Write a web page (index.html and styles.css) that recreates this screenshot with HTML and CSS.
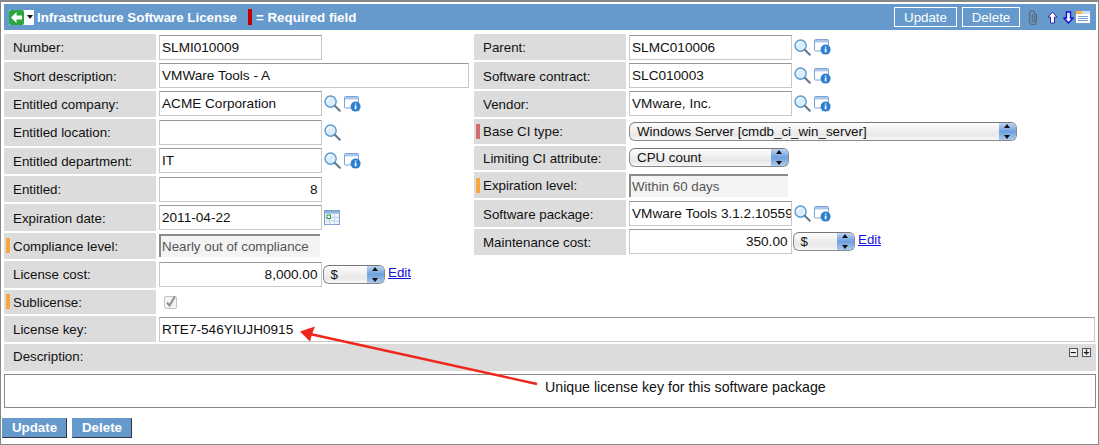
FILE: index.html
```html
<!DOCTYPE html>
<html lang="en">
<head>
  <meta charset="UTF-8">
  <title>Infrastructure Software License</title>
  <link rel="stylesheet" href="styles.css">
</head>
<body>

<svg class="defs" width="0" height="0">
  <defs>
    <symbol id="lens" viewBox="0 0 17 17">
      <circle cx="6.6" cy="6.6" r="5.6" fill="#dceefb" stroke="#5b9bd0" stroke-width="1.4"/>
      <path d="M3.4 6.4a3.2 3.2 0 0 1 3.2-3.2" fill="none" stroke="#fff" stroke-width="1.3"/>
      <path d="M10.8 10.8l5 5" stroke="#66788c" stroke-width="2" stroke-linecap="round"/>
    </symbol>
    <symbol id="info" viewBox="0 0 17 16">
      <rect x=".5" y=".5" width="14" height="11.5" rx="1" fill="#fff" stroke="#7ba3d6"/>
      <rect x="1" y="1" width="13" height="2.4" fill="#a9c6ea"/>
      <circle cx="11.6" cy="10.6" r="5" fill="#2f7fd0"/>
      <path d="M11.6 7.4v1.2M11.6 9.6v3.6" stroke="#fff" stroke-width="1.7"/>
    </symbol>
  </defs>
</svg>

<div class="page">
  <div class="title-bar">
    <div class="nav-btn">
      <svg width="15" height="15" viewBox="0 0 15 15">
        <rect width="15" height="15" rx="2" fill="#2ba63c"/>
        <path d="M7.5 2L2 7.5l5.5 5.5V9.6H13V5.4H7.5z" fill="#fff"/>
      </svg>
      <span class="caret"></span>
    </div>
    <span class="title">Infrastructure Software License</span>
    <span class="req-mark"></span>
    <span class="title">= Required field</span>
    <div class="title-actions">
      <button class="head-btn btn-a">Update</button>
      <button class="head-btn btn-b">Delete</button>
      <svg class="clip" width="10" height="15" viewBox="0 0 10 15">
        <path d="M8.5 4v7a3.5 3.5 0 0 1-7 0V3.4a2.6 2.6 0 0 1 5.2 0V10.5a1.2 1.2 0 0 1-2.4 0V4" fill="none" stroke="#5f6a78" stroke-width="1.3"/>
      </svg>
      <svg class="arrow-up" width="11" height="13" viewBox="0 0 11 13">
        <path d="M5.5 1L1 6h2.5v6h4V6H10z" fill="#fff" stroke="#2a2ab0"/>
      </svg>
      <svg class="arrow-down" width="11" height="13" viewBox="0 0 11 13">
        <path d="M5.5 12L1 7h2.5V1h4v6H10z" fill="#fff" stroke="#1414d8" stroke-width="1.4"/>
      </svg>
      <svg width="16" height="14" viewBox="0 0 16 14">
        <rect x=".5" y=".5" width="15" height="13" fill="#fff" stroke="#6f9ad6"/>
        <rect x="1" y="1" width="6" height="3" fill="#f5b942"/>
        <rect x="7" y="1" width="8" height="3" fill="#cfe0f5"/>
        <path d="M3 6.5h10M3 8.5h10M3 10.5h10" stroke="#7aa2d8"/>
      </svg>
    </div>
  </div>

  <div class="columns">
    <div class="col">
      <div class="row"><label class="lbl">Number:</label><div class="field w-std">SLMI010009</div></div>
      <div class="row"><label class="lbl">Short description:</label><div class="field w-wide">VMWare Tools - A</div></div>
      <div class="row">
        <label class="lbl">Entitled company:</label><div class="field w-std">ACME Corporation</div>
        <svg class="ic-lens"><use href="#lens"/></svg><svg class="ic-info"><use href="#info"/></svg>
      </div>
      <div class="row">
        <label class="lbl">Entitled location:</label><div class="field w-std"></div>
        <svg class="ic-lens"><use href="#lens"/></svg>
      </div>
      <div class="row">
        <label class="lbl">Entitled department:</label><div class="field w-std">IT</div>
        <svg class="ic-lens"><use href="#lens"/></svg><svg class="ic-info"><use href="#info"/></svg>
      </div>
      <div class="row"><label class="lbl">Entitled:</label><div class="field w-std num">8</div></div>
      <div class="row">
        <label class="lbl">Expiration date:</label><div class="field w-std">2011-04-22</div>
        <svg class="ic-cal" width="16" height="15" viewBox="0 0 16 15">
          <rect x=".5" y=".5" width="15" height="14" fill="#eef4fb" stroke="#7ba2cf"/>
          <rect x="1" y="1" width="14" height="2.5" fill="#8fb3dc"/>
          <path d="M5.5 3.5v11M10.5 3.5v11M1 7.5h14M1 11h14" stroke="#c2d5ea"/>
          <rect x="3" y="5" width="3.5" height="3.5" fill="#fff" stroke="#2c9a3c"/>
        </svg>
      </div>
      <div class="row"><label class="lbl flag-orange">Compliance level:</label><div class="field-ro w-comp">Nearly out of compliance</div></div>
      <div class="row">
        <label class="lbl">License cost:</label><div class="field w-std num">8,000.00</div>
        <div class="select w-cur"><span>$</span><span class="stepper"></span></div><a class="edit" href="#">Edit</a>
      </div>
      <div class="row row-sub">
        <label class="lbl flag-orange">Sublicense:</label>
        <svg class="check" width="13" height="14" viewBox="0 0 13 14">
          <rect x=".5" y="1.5" width="12" height="12" rx="1.5" fill="#f4f4f4" stroke="#c4c4c4"/>
          <path d="M3 7.5l2.6 3L10.8 1.5" fill="none" stroke="#8f8f8f" stroke-width="2"/>
        </svg>
      </div>
    </div>

    <div class="col">
      <div class="row">
        <label class="lbl">Parent:</label><div class="field w-std">SLMC010006</div>
        <svg class="ic-lens"><use href="#lens"/></svg><svg class="ic-info"><use href="#info"/></svg>
      </div>
      <div class="row">
        <label class="lbl">Software contract:</label><div class="field w-std">SLC010003</div>
        <svg class="ic-lens"><use href="#lens"/></svg><svg class="ic-info"><use href="#info"/></svg>
      </div>
      <div class="row">
        <label class="lbl">Vendor:</label><div class="field w-std">VMware, Inc.</div>
        <svg class="ic-lens"><use href="#lens"/></svg><svg class="ic-info"><use href="#info"/></svg>
      </div>
      <div class="row row-short">
        <label class="lbl flag-red">Base CI type:</label>
        <div class="select w-base"><span>Windows Server [cmdb_ci_win_server]</span><span class="stepper"></span></div>
      </div>
      <div class="row row-short">
        <label class="lbl">Limiting CI attribute:</label>
        <div class="select w-attr"><span>CPU count</span><span class="stepper"></span></div>
      </div>
      <div class="row"><label class="lbl flag-orange">Expiration level:</label><div class="field-ro w-exp">Within 60 days</div></div>
      <div class="row">
        <label class="lbl">Software package:</label><div class="field w-std">VMware Tools 3.1.2.10559</div>
        <svg class="ic-lens"><use href="#lens"/></svg><svg class="ic-info"><use href="#info"/></svg>
      </div>
      <div class="row">
        <label class="lbl">Maintenance cost:</label><div class="field w-std num">350.00</div>
        <div class="select w-cur"><span>$</span><span class="stepper"></span></div><a class="edit" href="#">Edit</a>
      </div>
    </div>
  </div>

  <div class="row row-key">
    <label class="lbl">License key:</label><div class="field w-full">RTE7-546YIUJH0915</div>
  </div>

  <div class="desc-head">
    <span>Description:</span>
    <span class="toggles"><span class="toggle">&minus;</span><span class="toggle">+</span></span>
  </div>
  <div class="desc-box"></div>

  <div class="foot-actions">
    <button class="foot-btn btn-update">Update</button>
    <button class="foot-btn btn-delete">Delete</button>
  </div>

  <!-- callout drawn over the form -->
  <svg class="callout-arrow" width="1099" height="445" viewBox="0 0 1099 445">
    <path d="M310 334L537 384" stroke="#f0261c" stroke-width="2.4"/>
    <path d="M300 331.5L315 326.5L312 334L310 341.5z" fill="#f0261c"/>
  </svg>
  <div class="callout-text">Unique license key for this software package</div>
</div>

</body>
</html>
```

FILE: styles.css
```css
* {
  box-sizing: border-box;
}
body {
  margin: 0;
  font-family: "Liberation Sans", Arial, sans-serif;
  font-size: 13.33px;
  color: #111;
  background: white;
}
.defs {
  position: absolute;
}
.page {
  position: relative;
  width: 1099px;
  height: 445px;
  border: 1px solid #888;
  border-top-width: 2px;
  padding: 2px 2px 0 3px;
  overflow: hidden;
}

/* title bar */
.title-bar {
  display: flex;
  align-items: center;
  height: 26px;
  background: #6699cc;
  padding-left: 5px;
  color: white;
  font-weight: bold;
}
.nav-btn {
  display: flex;
  align-items: center;
  width: 25px;
  height: 15px;
  background: white;
  margin-right: 3px;
}
.caret {
  width: 0;
  height: 0;
  border: 3px solid transparent;
  border-top: 4px solid #111;
  border-bottom: 0;
  margin-left: 3px;
}
.req-mark {
  width: 4px;
  height: 16px;
  background: #c00000;
  margin: 0 4px 0 11px;
}
.title-actions {
  display: flex;
  align-items: center;
  margin-left: auto;
  padding-right: 5px;
}
.head-btn {
  height: 20px;
  border: 1px solid white;
  background: #6699cc;
  color: white;
  font-family: inherit;
  font-size: 13.33px;
  padding: 0;
}
.btn-a {
  width: 63px;
  margin-right: 5px;
}
.btn-b {
  width: 58px;
  margin-right: 8px;
}
.clip {
  margin-right: 9px;
}
.arrow-up {
  margin-right: 5px;
}
.arrow-down {
  margin-right: 1px;
}

/* form rows */
.columns {
  display: grid;
  grid-template-columns: 470px 1fr;
  margin-top: 4px;
}
.col {
  display: flex;
  flex-direction: column;
  gap: 2px;
}
.row {
  display: flex;
  align-items: center;
  height: 26.4px;
}
.row-short {
  height: 24.4px;
}
.row-sub {
  height: 24.5px;
}
.row-key {
  margin-top: 2px;
}
.lbl {
  width: 152px;
  height: 100%;
  flex: none;
  display: flex;
  align-items: center;
  padding: 1px 0 0 9px;
  background: #dcdcdc;
  margin-right: 3px;
}
.flag-orange {
  background: linear-gradient(#f5a742, #f5a742) no-repeat 2px center / 4px 15px, #dcdcdc;
}
.flag-red {
  background: linear-gradient(#d06c6c, #d06c6c) no-repeat 2px center / 4px 15px, #dcdcdc;
}
.field {
  height: 25px;
  flex: none;
  font-size: 13.6px;
  line-height: 24px;
  padding: 0 3px 0 2px;
  background: white;
  border: 1px solid #c8c8c8;
  border-top-color: #999;
  white-space: nowrap;
  overflow: hidden;
}
.num {
  text-align: right;
}
.field-ro {
  height: 23px;
  flex: none;
  line-height: 22px;
  padding: 0 2px 0 1px;
  color: #555;
  background: #f3f3f3;
  border-top: 2px solid #8a8a8a;
  border-left: 2px solid #8a8a8a;
  white-space: nowrap;
  overflow: hidden;
}
.w-std { width: 162.5px; }
.w-wide { width: 310px; }
.w-full { width: 936px; }
.w-comp { width: 161px; }
.w-exp { width: 159px; }
.w-cur { width: 62px; }
.w-base { width: 388px; }
.w-attr { width: 160px; }

.select {
  display: flex;
  align-items: center;
  justify-content: space-between;
  height: 19px;
  flex: none;
  padding-left: 7px;
  border: 1px solid #8a8a8a;
  border-top-color: #777;
  border-radius: 6px;
  background: linear-gradient(#fdfdfd, #e8e8e8 70%, #f8f8f8);
  overflow: hidden;
}
.field + .select {
  margin-left: 1px;
}
.stepper {
  position: relative;
  width: 17px;
  height: 100%;
  background: linear-gradient(#bcd4f2, #6fa0dd 50%, #a9c8ee);
}
.stepper::before,
.stepper::after {
  content: "";
  position: absolute;
  left: 5px;
  border: 3px solid transparent;
}
.stepper::before {
  top: 1px;
  border-top: 0;
  border-bottom: 4px solid #111;
}
.stepper::after {
  bottom: 1px;
  border-bottom: 0;
  border-top: 4px solid #111;
}
.edit {
  color: #1111dd;
  margin: -4px 0 0 3.5px;
}

/* icons */
.ic-lens {
  width: 17px;
  height: 17px;
  margin-left: 2px;
}
.ic-info {
  width: 17px;
  height: 16px;
  margin-left: 3px;
}
.ic-cal {
  margin-left: 2px;
}
.check {
  margin-left: 5px;
}

/* lower part */
.desc-head {
  display: flex;
  justify-content: space-between;
  height: 26.5px;
  margin-top: 2px;
  padding: 5px 5px 0 9px;
  background: #dcdcdc;
}
.toggles {
  display: flex;
  gap: 4px;
  margin-top: -1px;
}
.toggle {
  width: 9px;
  height: 9px;
  border: 1px solid #555;
  background: #f0f0f0;
  font-size: 10px;
  font-weight: bold;
  line-height: 7px;
  text-align: center;
  color: #111;
}
.desc-box {
  height: 34px;
  margin-top: 3px;
  border: 1px solid #8a8a8a;
  background: white;
}
.foot-actions {
  display: flex;
  gap: 5px;
  margin: 10px 0 0 -2px;
}
.foot-btn {
  height: 20px;
  padding: 0;
  background: #6699cc;
  color: white;
  font-family: inherit;
  font-size: 13.33px;
  font-weight: bold;
  border: 1px solid #6699cc;
  border-right-color: #334;
  border-bottom-color: #334;
}
.btn-update { width: 65px; }
.btn-delete { width: 60px; }

/* callout */
.callout-arrow {
  position: absolute;
  left: -1px;
  top: -2px;
}
.callout-text {
  position: absolute;
  left: 544px;
  top: 377px;
  font-size: 14.2px;
}
```
